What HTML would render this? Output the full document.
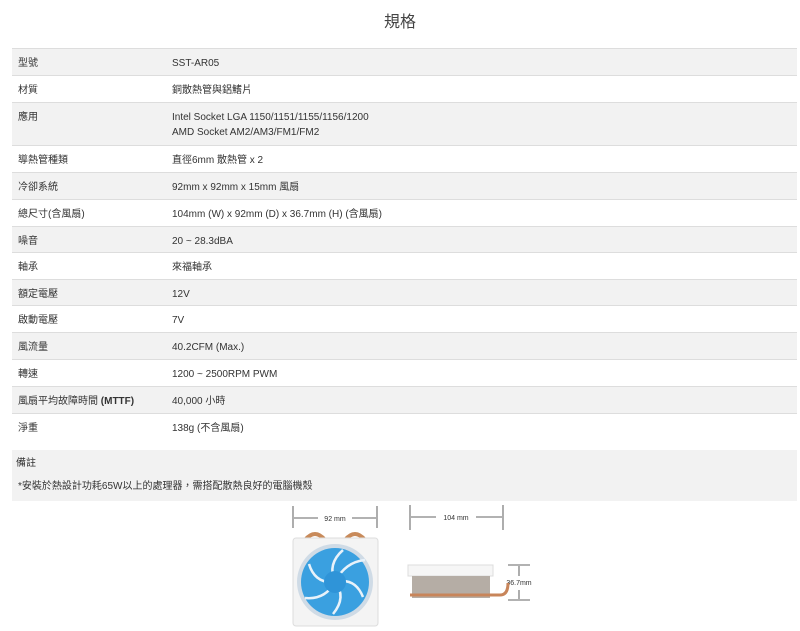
<!DOCTYPE html>
<html><head><meta charset="utf-8"><style>
body{margin:0;width:800px;height:631px;background:#fff;font-family:"Liberation Sans","Noto Sans CJK TC",sans-serif;color:#333;position:relative;overflow:hidden}
h1{position:absolute;top:8px;left:0;width:800px;text-align:center;font-size:16px;font-weight:normal;margin:0;color:#444}
.r{position:absolute;left:12px;width:785px;border-top:1px solid #ddd;font-size:10px;box-sizing:border-box}
.g{background:#f2f2f2}
.r span{position:absolute;top:9px;line-height:12px}
.k{left:6px}.v{left:160px}
.note{position:absolute;left:12px;top:450px;width:785px;height:51px;background:#f2f2f2;font-size:10px}
.note span{line-height:12px}
</style></head><body>
<h1>規格</h1>
<div class="r g" style="top:48px;height:27px"><span class="k">型號</span><span class="v">SST-AR05</span></div>
<div class="r" style="top:75px;height:27px"><span class="k">材質</span><span class="v">銅散熱管與鋁鰭片</span></div>
<div class="r g" style="top:102px;height:43px"><span class="k">應用</span><span class="v" style="line-height:15px;top:7px">Intel Socket LGA 1150/1151/1155/1156/1200<br>AMD Socket AM2/AM3/FM1/FM2</span></div>
<div class="r" style="top:145px;height:27px"><span class="k">導熱管種類</span><span class="v">直徑6mm 散熱管 x 2</span></div>
<div class="r g" style="top:172px;height:27px"><span class="k">冷卻系統</span><span class="v">92mm x 92mm x 15mm 風扇</span></div>
<div class="r" style="top:199px;height:27px"><span class="k">總尺寸(含風扇)</span><span class="v">104mm (W) x 92mm (D) x 36.7mm (H) (含風扇)</span></div>
<div class="r g" style="top:226px;height:26px"><span class="k">噪音</span><span class="v">20 ~ 28.3dBA</span></div>
<div class="r" style="top:252px;height:27px"><span class="k">軸承</span><span class="v">來福軸承</span></div>
<div class="r g" style="top:279px;height:26px"><span class="k">額定電壓</span><span class="v">12V</span></div>
<div class="r" style="top:305px;height:27px"><span class="k">啟動電壓</span><span class="v">7V</span></div>
<div class="r g" style="top:332px;height:27px"><span class="k">風流量</span><span class="v">40.2CFM (Max.)</span></div>
<div class="r" style="top:359px;height:27px"><span class="k">轉速</span><span class="v">1200 ~ 2500RPM PWM</span></div>
<div class="r g" style="top:386px;height:27px"><span class="k">風扇平均故障時間 <b>(MTTF)</b></span><span class="v">40,000 小時</span></div>
<div class="r" style="top:413px;height:27px"><span class="k">淨重</span><span class="v">138g (不含風扇)</span></div>
<div class="note"><span style="position:absolute;left:4px;top:8px">備註</span><span style="position:absolute;left:6px;top:31px">*安裝於熱設計功耗65W以上的處理器，需搭配散熱良好的電腦機殼</span></div>
<svg style="position:absolute;left:0;top:0" width="800" height="631">
<g stroke="#333" stroke-width="0.8">
<line x1="293" y1="506" x2="293" y2="528"/><line x1="377" y1="506" x2="377" y2="528"/>
<line x1="294" y1="518" x2="318" y2="518"/><line x1="352" y1="518" x2="376" y2="518"/>
<line x1="410" y1="505" x2="410" y2="530"/><line x1="503" y1="505" x2="503" y2="530"/>
<line x1="411" y1="517" x2="436" y2="517"/><line x1="476" y1="517" x2="502" y2="517"/>
<line x1="508" y1="565" x2="530" y2="565"/><line x1="508" y1="600" x2="530" y2="600"/>
<line x1="519" y1="566" x2="519" y2="576"/><line x1="519" y1="590" x2="519" y2="599"/>
</g>
<text x="335" y="521" font-size="7" text-anchor="middle" fill="#333" font-family="Liberation Sans">92 mm</text>
<text x="456" y="520" font-size="7" text-anchor="middle" fill="#333" font-family="Liberation Sans">104 mm</text>
<text x="519" y="585" font-size="7" text-anchor="middle" fill="#333" font-family="Liberation Sans">36.7mm</text>
<path d="M305 540 q10 -12 20 0 M345 540 q10 -12 20 0" stroke="#c88a5a" stroke-width="4" fill="none"/>
<rect x="293" y="538" width="85" height="88" rx="3" fill="#f4f4f4" stroke="#ddd"/>
<circle cx="335" cy="582" r="38" fill="#cfdbe6"/>
<circle cx="335" cy="582" r="34" fill="#3aa0e0"/>
<g stroke="#e8f2fa" stroke-width="2.5" fill="none">
<path d="M335 582 q10 -20 30 -22"/><path d="M335 582 q20 -5 28 15"/><path d="M335 582 q12 15 -2 32"/><path d="M335 582 q-10 18 -30 16"/><path d="M335 582 q-20 2 -26 -18"/><path d="M335 582 q-8 -18 8 -32"/>
</g>
<circle cx="335" cy="582" r="11" fill="#2f94d8"/>
<rect x="408" y="565" width="85" height="11" fill="#f6f6f6" stroke="#ddd"/>
<rect x="412" y="576" width="78" height="22" fill="#b5ada5"/>
<path d="M410 595 h90 q8 0 8 -12" stroke="#c8855a" stroke-width="3" fill="none"/>
</svg>
</body></html>
